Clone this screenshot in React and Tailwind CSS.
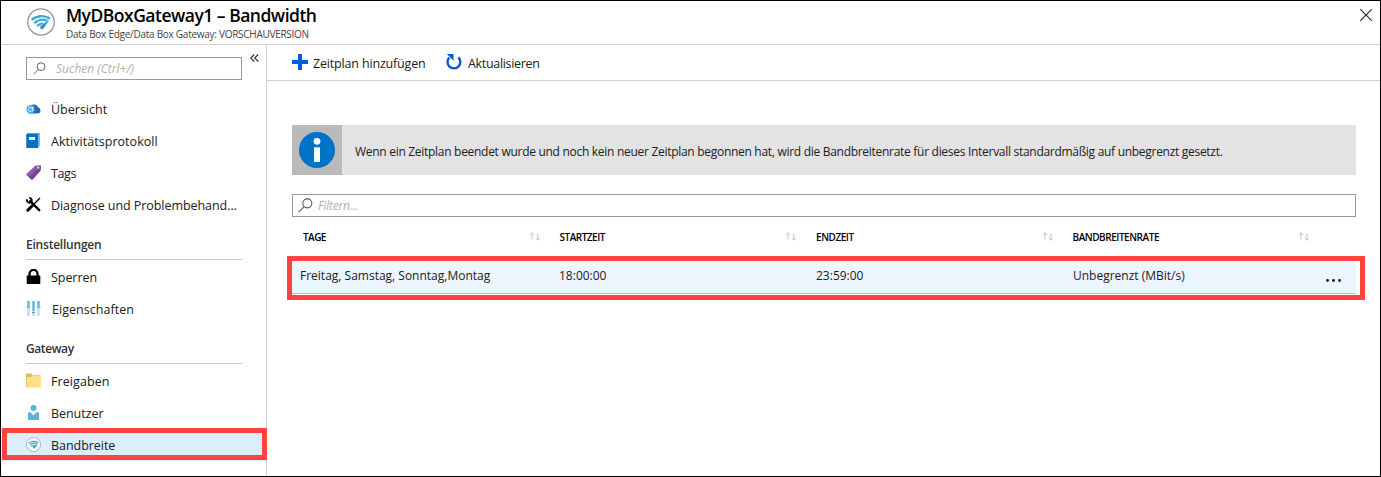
import React from "react";

function WifiBadge({ className }) {
  return (
    <svg viewBox="0 0 28 28" className={className} fill="none">
      <circle cx="14" cy="14" r="13.2" fill="#fff" stroke="#939393" strokeWidth="1.3" />
      <g stroke="#3fa6da" strokeWidth="2.3">
        <path d="M4.6 12C9.5 7.400 17.500 7 23.200 10.800" />
        <path d="M7.2 15.100C11 11.400 16.500 11 20.500 12.800" />
        <path d="M10 18c2.500-2.400 5.400-2.800 8-1.900" />
      </g>
      <path d="M23.500 10.500 17 20.300a2.200 2.200 0 1 1-3.500-2.600Z" fill="#2b93cf" stroke="#fff" strokeWidth=".5" />
    </svg>
  );
}

function SearchIcon({ className }) {
  return (
    <svg viewBox="0 0 14 14" className={className} fill="none" stroke="#555" strokeWidth="1">
      <circle cx="8.700" cy="5" r="4.200" />
      <path d="M5.700 8 .6 13.200" />
    </svg>
  );
}

function CloudIcon() {
  return (
    <svg viewBox="0 0 15 15" className="size-[15px]">
      <path d="M4 12.500a3.600 3.600 0 0 1-.7-7A4.800 4.800 0 0 1 7.500 3.400c2.600-.2 4.200 1.200 4.700 3.200a3 3 0 0 1-.2 5.900Z" fill="#1c6fc0" />
      <circle cx="4.600" cy="8.300" r="4.200" fill="#45a9dc" />
      <circle cx="4.600" cy="8.300" r="2.300" fill="none" stroke="#e8f6fd" strokeWidth="1.100" strokeDasharray="2 .7" />
      <path d="m4.600 8.300 2.800-3" stroke="#e8f6fd" strokeWidth=".8" />
    </svg>
  );
}

function BookIcon() {
  return (
    <svg viewBox="0 0 15 15" className="size-[15px]">
      <path d="M2 0h12v13H2Z" fill="#5ba3d9" />
      <path d="M.5 1.500 2 0v15H.5Z" fill="#0a5ea8" />
      <path d="M.5 1h11.500V15H.5Z" fill="#0072c6" />
      <path d="M12 1 14 0v13l-2 2Z" fill="#7db9e2" />
      <path d="M3 4h6V7H3Z" fill="#fff" />
    </svg>
  );
}

function TagIcon() {
  return (
    <svg viewBox="0 0 15 15" className="size-[15px]">
      <path d="M9.300.8 14 .2q1 0 .9 1l-.5 4.500L6.800 14.300q-.8.700-1.600 0L.6 10.200q-.6-.7 0-1.400Z" fill="#8d5aa8" />
      <path d="M14.900.6 14.400 5.700 6.800 14.300q-.8.700-1.600 0L3 12.300Z" fill="#7b4397" />
      <circle cx="12.300" cy="2.800" r="1" fill="#fff" />
    </svg>
  );
}

function ToolsIcon() {
  return (
    <svg viewBox="0 0 15 15" className="size-[15px]" fill="none" stroke="#000">
      <path d="m4.200 4.200 9 9" strokeWidth="2.400" strokeLinecap="round" />
      <path d="M1 2.300a2.600 2.600 0 0 0 4.300 2.600A2.700 2.700 0 0 0 3.200.8" strokeWidth="1.900" />
      <path d="M14 1 8.300 6.700" strokeWidth="1.300" />
      <path d="M6.500 8.500 1.800 13.200" strokeWidth="3" strokeLinecap="round" />
    </svg>
  );
}

function LockIcon() {
  return (
    <svg viewBox="0 0 15 15" className="size-[15px]">
      <path d="M3.500 8V4.800a4 4 0 0 1 8 0V8" fill="none" stroke="#000" strokeWidth="2.200" />
      <rect x=".7" y="6.500" width="13.600" height="8.500" rx=".8" fill="#000" />
    </svg>
  );
}

function SlidersIcon() {
  return (
    <svg viewBox="0 0 15 15" className="size-[15px]">
      <path d="M1 0h3v15H1ZM6 0h3v15H6ZM11 0h3v15h-3Z" fill="#c3e3f2" />
      <path d="M1.500 0h2v5h-2ZM6.500 0h2v10h-2ZM11.500 0h2v5h-2Z" fill="#59b4d9" />
      <path d="M.5 5.500h4v1h-4ZM6 11h3v1H6ZM10.500 5.500h4v1h-4Z" fill="#7a8b93" />
    </svg>
  );
}

function FolderIcon() {
  return (
    <svg viewBox="0 0 15 15" className="size-[15px]">
      <path d="M0 1.200Q0 .5.700.5h4.500L6.500 2H14.500V6H0Z" fill="#d3bb6c" />
      <path d="M0 14.500V4h5l1.500-1.500H15v12Z" fill="#ffdf85" />
      <path d="M0 3.500h1v11H0Z" fill="#e4cb78" />
    </svg>
  );
}

function UserIcon() {
  return (
    <svg viewBox="0 0 15 15" className="size-[15px]" fill="#59b4d9">
      <circle cx="7.500" cy="3" r="3" />
      <path d="M2 7.300h2.500l3 3.200 3-3.200H13V15H2Z" />
    </svg>
  );
}

function NavItem({ icon, label, text, active }) {
  return (
    <a className={`flex h-8 items-start pl-[25px] pt-2 text-[12.5px] text-[#202020] ${active ? "bg-[#dbeeff]" : ""}`}>
      <span className="w-[15px] shrink-0">{icon}</span>
      <span className={`ml-[10px] leading-[18px] whitespace-nowrap ${text}`}>{label}</span>
    </a>
  );
}

function NavHeading({ children, text }) {
  return (
    <h2 className="mb-px ml-[25px] flex h-[39px] w-[216px] items-center border-b border-[#c8c8c8] pt-[10px] text-[12px] font-semibold text-[#333]">
      <span className={text}>{children}</span>
    </h2>
  );
}

function SortIcon() {
  return (
    <svg viewBox="0 0 12 9" className="mb-[5px] mr-[8px] h-[9px] w-3" fill="none" stroke="#bdbdbd" strokeWidth=".9">
      <path d="M3 7.500V.8M.6 3.200 3 .8l2.400 2.400M8.800 1.500v6.700M6.400 5.800l2.400 2.400 2.400-2.400" />
    </svg>
  );
}

const columns = [
  { name: "TAGE", text: "tracking-[-0.55px]" },
  { name: "STARTZEIT", text: "tracking-[-0.5px]" },
  { name: "ENDZEIT", text: "tracking-[-0.45px]" },
  { name: "BANDBREITENRATE", text: "tracking-[-0.45px]" },
];

export default function App() {
  return (
    <div className="relative flex h-[477px] w-[1381px] flex-col overflow-hidden border border-black bg-white font-['Open_Sans','Noto_Sans',sans-serif] text-[#202020]">
      <header className="flex h-11 shrink-0 border-b border-[#d0d0d0]">
        <WifiBadge className="ml-[26px] mt-[7px] size-7" />
        <div className="ml-[11px] flex-1">
          <h1 className="mt-[4px] text-[17.5px] font-semibold leading-[21px] tracking-[-0.5px] whitespace-nowrap text-black">
            MyDBoxGateway1 – Bandwidth
          </h1>
          <p className="mt-[2px] text-[10px] leading-[13px] tracking-[-0.27px] whitespace-nowrap text-[#444]">
            Data Box Edge/Data Box Gateway: VORSCHAUVERSION
          </p>
        </div>
        <svg viewBox="0 0 12 12" className="mr-[8px] mt-[8px] size-3" stroke="#222" strokeWidth="1.100">
          <path d="m.3.3 11.400 11.400M11.700.3.3 11.700" />
        </svg>
      </header>

      <div className="flex min-h-0 flex-1">
        <aside className="w-[266px] shrink-0 border-r border-[#d0d0d0]">
          <div className="flex pt-3">
            <div className="ml-[25px] flex h-[23px] w-[216px] items-center border border-[#999] pl-[6px]">
              <SearchIcon className="size-[13px]" />
              <span className="ml-[10px] text-[12px] italic text-[#b0b0b0]">Suchen (Ctrl+/)</span>
            </div>
            <svg viewBox="0 0 9 8" className="ml-[8px] -mt-[3px] h-2 w-[9px]" fill="none" stroke="#333" strokeWidth="1.200">
              <path d="M4.200.5.8 4l3.400 3.500M8.200.5 4.800 4l3.400 3.500" />
            </svg>
          </div>
          <nav className="mt-[13px]">
            <NavItem icon={<CloudIcon />} label="Übersicht" text="" />
            <NavItem icon={<BookIcon />} label="Aktivitätsprotokoll" text="tracking-[0.04px]" />
            <NavItem icon={<TagIcon />} label="Tags" text="tracking-[-0.4px]" />
            <NavItem icon={<ToolsIcon />} label="Diagnose und Problembehand..." text="tracking-[-0.06px]" />
            <NavHeading text="tracking-[-0.22px]">Einstellungen</NavHeading>
            <NavItem icon={<LockIcon />} label="Sperren" text="tracking-[-0.05px]" />
            <NavItem icon={<SlidersIcon />} label="Eigenschaften" text="pl-px tracking-[0.04px]" />
            <NavHeading text="tracking-[-0.4px]">Gateway</NavHeading>
            <NavItem icon={<FolderIcon />} label="Freigaben" text="tracking-[0.08px]" />
            <NavItem icon={<UserIcon />} label="Benutzer" text="tracking-[-0.05px]" />
            <NavItem icon={<WifiBadge className="size-[15px]" />} label="Bandbreite" text="tracking-[-0.04px]" active />
          </nav>
        </aside>

        <main className="flex-1">
          <div className="flex h-9 items-center border-b border-[#d0d0d0] pl-[25px] text-[12.5px]">
            <svg viewBox="0 0 16 16" className="-mt-px size-4" fill="#015cda">
              <path d="M6 0h4v6h6v4h-6v6H6v-6H0V6h6Z" />
            </svg>
            <span className="ml-[5px] w-[113px] pt-[2px] leading-[18px] tracking-[-0.17px] whitespace-nowrap">Zeitplan hinzufügen</span>
            <svg viewBox="0 0 16 16" className="-mt-px ml-5 size-4" fill="none" stroke="#015cda" strokeWidth="2.400">
              <path d="M3.200 3.600A6.400 6.400 0 1 0 12.300 3.300" />
              <path d="M.8 0h6.700v6.700Z" fill="#015cda" stroke="none" />
            </svg>
            <span className="ml-[6px] pt-[2px] leading-[18px] tracking-[-0.33px] whitespace-nowrap">Aktualisieren</span>
          </div>

          <div className="ml-[25px] mt-11 w-[1064px]">
            <div className="flex h-[50px] items-center bg-[#e3e3e3] text-[12px]">
              <div className="flex size-[50px] items-center justify-center bg-[#bababa]">
                <svg viewBox="0 0 36 36" className="size-9">
                  <circle cx="18" cy="18" r="18" fill="#0072c6" />
                  <circle cx="18" cy="9.300" r="3.400" fill="#fff" />
                  <path d="M15 15.300h6V30h-6Z" fill="#fff" />
                </svg>
              </div>
              <span className="ml-[13px] pt-[3px] tracking-[-0.29px] whitespace-nowrap">
                Wenn ein Zeitplan beendet wurde und noch kein neuer Zeitplan begonnen hat, wird die Bandbreitenrate für dieses Intervall standardmäßig auf unbegrenzt gesetzt.
              </span>
            </div>
            <div className="mt-[19px] flex h-[23px] items-center border border-[#999] pl-[5px]">
              <SearchIcon className="size-[15px]" />
              <span className="ml-[5px] text-[12px] italic tracking-[-0.25px] text-[#b0b0b0]">Filtern...</span>
            </div>
            <div className="flex h-11 items-center text-[10px] font-semibold text-black">
              {columns.map((c) => (
                <div key={c.name} className="flex w-[256.5px] items-center justify-between pl-[11px]">
                  <span className={`-mt-[3px] ${c.text}`}>{c.name}</span>
                  <SortIcon />
                </div>
              ))}
            </div>
            <div className="flex h-[33px] items-center border-b border-[#b8c0c6] bg-[#edf5ff] pb-[3px] text-[12px] whitespace-nowrap">
              <span className="w-[267px] pl-2">Freitag, Samstag, Sonntag,Montag</span>
              <span className="w-[257px]">18:00:00</span>
              <span className="w-[257px]">23:59:00</span>
              <span className="w-[253px]">Unbegrenzt (MBit/s)</span>
              <svg viewBox="0 0 15 3" className="mt-[9px] h-[3px] w-[15px]" fill="#111">
                <circle cx="1.500" cy="1.500" r="1.400" />
                <circle cx="7.500" cy="1.500" r="1.400" />
                <circle cx="13.500" cy="1.500" r="1.400" />
              </svg>
            </div>
          </div>
        </main>
      </div>

      <div className="absolute left-px top-[427px] h-8 w-[265px] border-5 border-[#ff4343]" />
      <div className="absolute left-[286px] top-[255px] h-11 w-[1078px] border-5 border-[#ff4343]" />
    </div>
  );
}
